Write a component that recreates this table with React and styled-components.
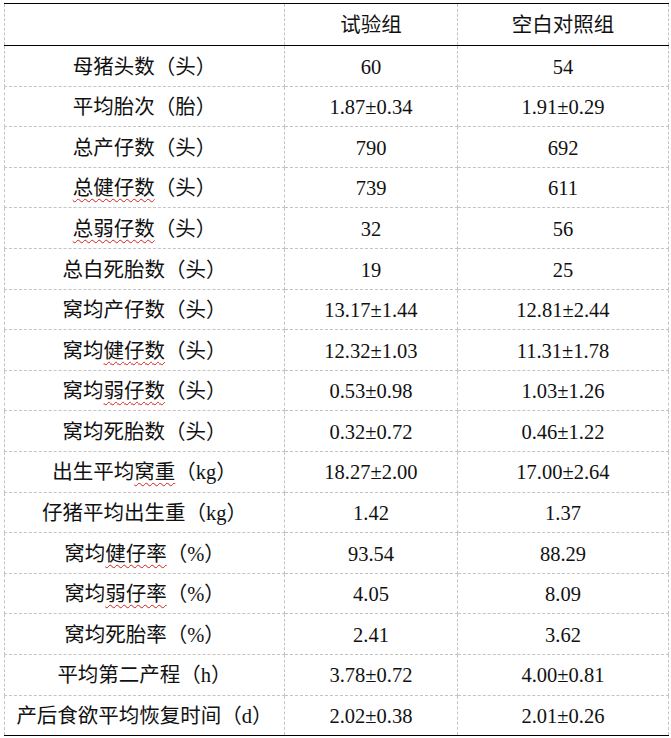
import styled, { createGlobalStyle } from 'styled-components'

const GlobalStyle = createGlobalStyle`
  body {
    margin: 0;
    background: #ffffff;
    font-family: "Liberation Serif", "Noto Sans CJK SC", serif;
    color: #111;
  }
`

// labels: strings, or [text, true] for the wavy spell-check underline
const rows = [
  [['母猪头数（头）'], '60', '54'],
  [['平均胎次（胎）'], '1.87±0.34', '1.91±0.29'],
  [['总产仔数（头）'], '790', '692'],
  [[['总健仔数', true], '（头）'], '739', '611'],
  [[['总弱仔数', true], '（头）'], '32', '56'],
  [['总白死胎数（头）'], '19', '25'],
  [['窝均产仔数（头）'], '13.17±1.44', '12.81±2.44'],
  [['窝均', ['健仔数', true], '（头）'], '12.32±1.03', '11.31±1.78'],
  [['窝均', ['弱仔数', true], '（头）'], '0.53±0.98', '1.03±1.26'],
  [['窝均死胎数（头）'], '0.32±0.72', '0.46±1.22'],
  [['出生平均', ['窝重', true], '（kg）'], '18.27±2.00', '17.00±2.64'],
  [['仔猪平均出生重（kg）'], '1.42', '1.37'],
  [['窝均', ['健仔率', true], '（%）'], '93.54', '88.29'],
  [['窝均', ['弱仔率', true], '（%）'], '4.05', '8.09'],
  [['窝均死胎率（%）'], '2.41', '3.62'],
  [['平均第二产程（h）'], '3.78±0.72', '4.00±0.81'],
  [['产后食欲平均恢复时间（d）'], '2.02±0.38', '2.01±0.26'],
]

const Label = ({ parts }) =>
  parts.map((p, i) =>
    Array.isArray(p) ? <Wavy key={i}>{p[0]}</Wavy> : <span key={i}>{p}</span>
  )

const App = () => {
  return (
    <Page>
      <GlobalStyle />
      <Table>
        <colgroup>
          <col style={{ width: 280 }} />
          <col style={{ width: 173 }} />
          <col style={{ width: 211 }} />
        </colgroup>
        <thead>
          <HeadRow>
            <Cell></Cell>
            <Cell>试验组</Cell>
            <Cell>空白对照组</Cell>
          </HeadRow>
        </thead>
        <tbody>
          {rows.map((r, i) => (
            <BodyRow key={i} $last={i === rows.length - 1}>
              <Cell>
                <Label parts={r[0]} />
              </Cell>
              <Cell>{r[1]}</Cell>
              <Cell>{r[2]}</Cell>
            </BodyRow>
          ))}
        </tbody>
      </Table>
    </Page>
  )
}

export default App

const Page = styled.div`
  padding: 3px 3px 0 4px;
`

const Table = styled.table`
  width: 664px;
  border-collapse: collapse;
  table-layout: fixed;
  border-top: 1.5px solid #000;
  border-bottom: 1.5px solid #000;
`

const Cell = styled.td`
  border: 1px dashed #c4c4c4;
  text-align: center;
  vertical-align: middle;
  padding: 0;
  font-size: 20.5px;
  line-height: 1;
  white-space: nowrap;
`

const HeadRow = styled.tr`
  height: 42px;

  td {
    border-top: 1.5px solid #000;
    border-bottom: 1.5px solid #000;
    padding-top: 2px;
  }
`

const BodyRow = styled.tr`
  height: 40.6px;

  td {
    padding-top: 2px;
    border-bottom: ${(p) => (p.$last ? '1.5px solid #000' : '1px dashed #c4c4c4')};
  }
`

const Wavy = styled.span`
  text-decoration: underline wavy #d02020;
  text-decoration-thickness: 1px;
  text-underline-offset: 3px;
`
